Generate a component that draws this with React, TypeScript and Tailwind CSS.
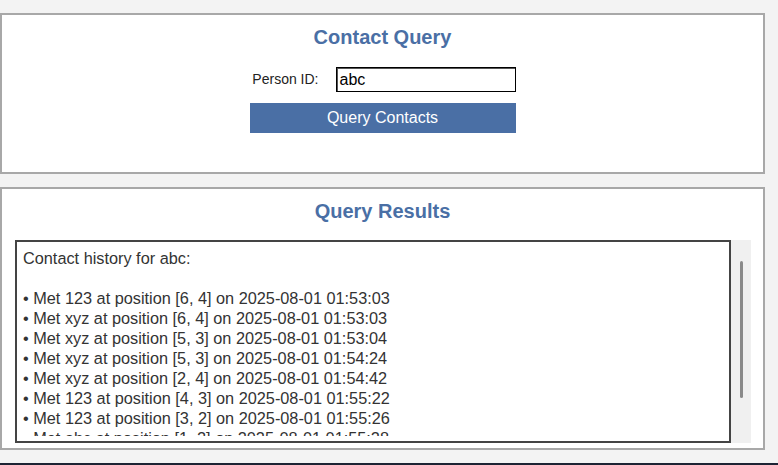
import React from "react";

const lines = [
  "• Met 123 at position [6, 4] on 2025-08-01 01:53:03",
  "• Met xyz at position [6, 4] on 2025-08-01 01:53:03",
  "• Met xyz at position [5, 3] on 2025-08-01 01:53:04",
  "• Met xyz at position [5, 3] on 2025-08-01 01:54:24",
  "• Met xyz at position [2, 4] on 2025-08-01 01:54:42",
  "• Met 123 at position [4, 3] on 2025-08-01 01:55:22",
  "• Met 123 at position [3, 2] on 2025-08-01 01:55:26",
  "• Met abc at position [1, 2] on 2025-08-01 01:55:28",
];

export default function App() {
  return (
    <div
      className="w-[778px] h-[465px] bg-[#f3f3f3] flex flex-col overflow-hidden"
      style={{ fontFamily: '"Liberation Sans", Arial, sans-serif' }}
    >
      <div className="pt-[13px] pr-[13px] flex flex-col gap-[13px] flex-1">
        {/* Top panel */}
        <div className="h-[161px] bg-white border-2 border-[#a8a8a8] flex flex-col items-center">
          <div className="mt-[11px] text-[20px] leading-[23px] font-bold text-[#4a6fa5]">
            Contact Query
          </div>
          <div className="mt-[18px] w-[266px] flex items-center justify-end gap-[17px]">
            <span className="text-[14px] text-[#222]">Person ID:</span>
            <div className="w-[180px] h-[25px] border border-black shadow-[inset_1px_1px_0_#555] bg-white flex items-center pl-[3px] text-[16px] text-black">
              abc
            </div>
          </div>
          <div className="mt-[11px] w-[266px] h-[30px] bg-[#4a6fa5] flex items-center justify-center text-[16px] text-white">
            Query Contacts
          </div>
        </div>
        {/* Bottom panel */}
        <div className="h-[263px] bg-white border-2 border-[#a8a8a8] flex flex-col">
          <div className="mt-[11px] text-[20px] leading-[23px] font-bold text-[#4a6fa5] text-center">
            Query Results
          </div>
          <div className="mt-[17px] ml-[13px] flex h-[203px]">
            <div className="w-[716px] h-full border-2 border-[#444] bg-white pl-[6px] pt-[6px] pb-[5px]">
              <div className="h-full overflow-hidden text-[16.3px] leading-[20px] text-[#333]">
                <div>Contact history for abc:</div>
                <div className="h-[20px]" />
                {lines.map((l, i) => (
                  <div key={i} className="whitespace-pre">
                    {l}
                  </div>
                ))}
              </div>
            </div>
            <div className="w-[20px] h-full bg-[#f0f0f0] flex justify-center pt-[21px]">
              <div className="w-[3px] h-[137px] rounded-full bg-[#8a8a8a]" />
            </div>
          </div>
        </div>
      </div>
      <div className="h-[2px] bg-[#1c2333]" />
    </div>
  );
}
